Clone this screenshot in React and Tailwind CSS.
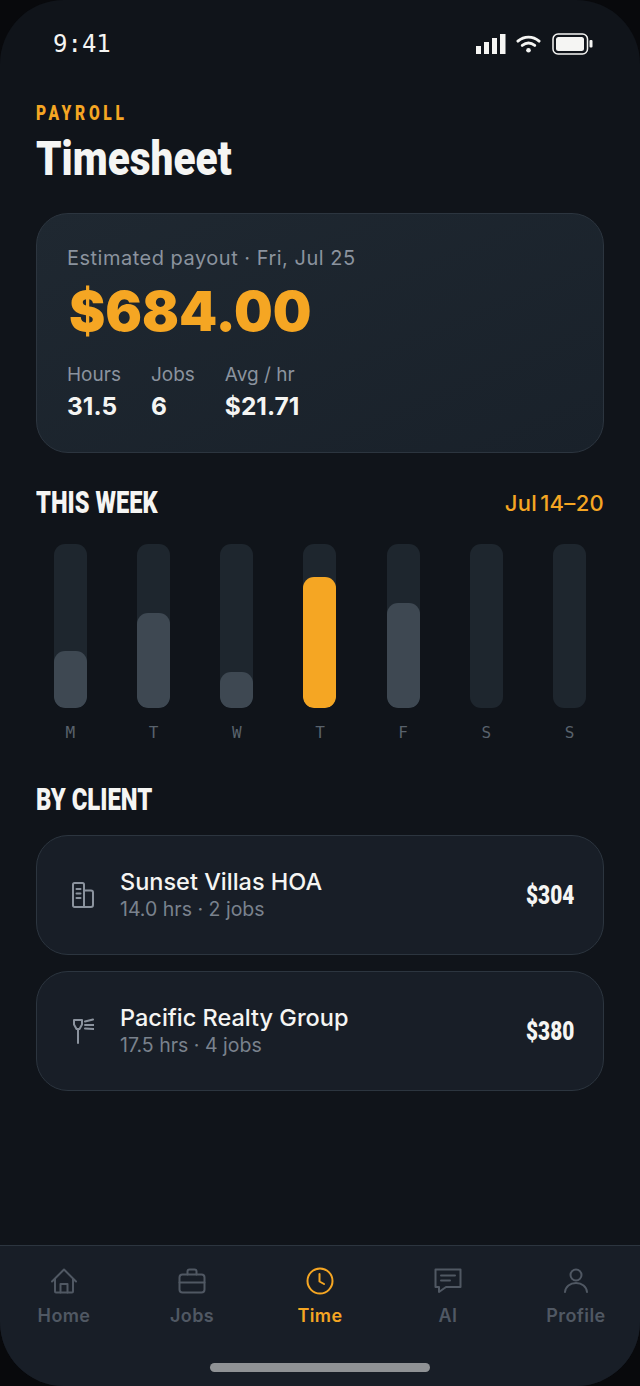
const days = [
  { label: "M", pct: 35 },
  { label: "T", pct: 58 },
  { label: "W", pct: 22 },
  { label: "T", pct: 80, active: true },
  { label: "F", pct: 64 },
  { label: "S", pct: 0 },
  { label: "S", pct: 0 },
];

const clients = [
  { name: "Sunset Villas HOA", meta: "14.0 hrs · 2 jobs", amount: "$304", icon: BuildingIcon },
  { name: "Pacific Realty Group", meta: "17.5 hrs · 4 jobs", amount: "$380", icon: SignIcon },
];

const tabs = [
  { label: "Home", icon: HomeIcon },
  { label: "Jobs", icon: BriefcaseIcon },
  { label: "Time", icon: ClockIcon, active: true },
  { label: "AI", icon: ChatIcon },
  { label: "Profile", icon: UserIcon },
];

const condensed = "font-['Roboto',sans-serif] font-black";

function BuildingIcon() {
  return (
    <svg width="22" height="26" viewBox="0 0 22 26" fill="none" stroke="currentColor" strokeWidth="2" strokeLinejoin="round" strokeLinecap="round">
      <path d="M1 2.500a1.500 1.500 0 0 1 1.500-1.500h8a1.500 1.500 0 0 1 1.500 1.500V25H2.500A1.500 1.500 0 0 1 1 23.500z" />
      <path d="M12 8.500h7a2 2 0 0 1 2 2V23a2 2 0 0 1-2 2h-7" />
      <path d="M4.500 7h4M4.500 11.500h4M4.500 16h4" />
    </svg>
  );
}

function SignIcon() {
  return (
    <svg width="22" height="26" viewBox="-1 0 22 26" fill="none" stroke="currentColor" strokeWidth="2" strokeLinejoin="round" strokeLinecap="round">
      <path d="M1 2h8v4.500L6.500 11h-3L1 6.500z" />
      <path d="M5 11v14" />
      <path d="M12 3.500L20 1.500M12 7h8.500M12 10.500l8.500.500" />
    </svg>
  );
}

function HomeIcon() {
  return (
    <svg width="28" height="28" viewBox="0 0 28 28" fill="none" stroke="currentColor" strokeWidth="2" strokeLinejoin="round" strokeLinecap="round">
      <path d="M2 14.500 14 2.500l12 12" />
      <path d="M5 12v12.500a1 1 0 0 0 1 1h16a1 1 0 0 0 1-1V12" />
      <path d="M10.500 25.500V17h7v8.500" />
    </svg>
  );
}

function BriefcaseIcon() {
  return (
    <svg width="28" height="28" viewBox="0 0 28 28" fill="none" stroke="currentColor" strokeWidth="2" strokeLinejoin="round" strokeLinecap="round">
      <rect x="1.500" y="7.500" width="25" height="18" rx="3" />
      <path d="M9.500 7.500V4.500a2 2 0 0 1 2-2h5a2 2 0 0 1 2 2v3" />
      <path d="M1.500 15.500h25" />
    </svg>
  );
}

function ClockIcon() {
  return (
    <svg width="28" height="28" viewBox="0 0 28 28" fill="none" stroke="currentColor" strokeWidth="2" strokeLinejoin="round" strokeLinecap="round">
      <circle cx="14" cy="14" r="12.500" />
      <path d="M13.500 7v7.500l4.500 2.500" />
    </svg>
  );
}

function ChatIcon() {
  return (
    <svg width="28" height="28" viewBox="0 0 28 28" fill="none" stroke="currentColor" strokeWidth="2" strokeLinejoin="round" strokeLinecap="round">
      <path d="M1.500 2.500h25v17.500H12l-7 5v-5H1.500z" />
      <path d="M7 8.500h14M7 13.500h9" />
    </svg>
  );
}

function UserIcon() {
  return (
    <svg width="28" height="28" viewBox="0 0 28 28" fill="none" stroke="currentColor" strokeWidth="2" strokeLinejoin="round" strokeLinecap="round">
      <circle cx="14" cy="8" r="5.500" />
      <path d="M3 25c.500-5.500 5-9 11-9s10.500 3.500 11 9" />
    </svg>
  );
}

function StatusIcons() {
  return (
    <div className="flex items-center gap-[10px]">
      <svg width="30" height="20" viewBox="0 0 30 20" fill="currentColor">
        <rect x="0" y="12" width="5" height="8" />
        <rect x="8" y="8" width="5" height="12" />
        <rect x="16" y="4" width="5" height="16" />
        <rect x="24" y="0" width="5.500" height="20" />
      </svg>
      <svg width="25" height="20" viewBox="0 0 26 20" fill="none" stroke="currentColor" strokeWidth="3" strokeLinecap="round">
        <path d="M2 7C8.500 1.500 17.500 1.500 24 7" />
        <path d="M6.500 11.500c4-3 9-3 13 0" />
        <circle cx="13" cy="16.500" r="2.400" fill="currentColor" stroke="none" />
      </svg>
      <svg width="41" height="22" viewBox="0 0 41 22" fill="none" className="ml-[1px]">
        <rect x="1" y="1" width="34.500" height="20" rx="5" stroke="currentColor" strokeWidth="1.500" />
        <rect x="4" y="4" width="28" height="14" rx="2.500" fill="currentColor" />
        <rect x="37.500" y="7" width="3" height="7.500" rx="1" fill="currentColor" />
      </svg>
    </div>
  );
}

function Stat({ label, value }) {
  return (
    <div>
      <div className="text-[19px] leading-[24px] text-[#8b939e]">{label}</div>
      <div className="mt-[4px] text-[24.500px] leading-[30px] font-bold text-[#f5f5f3]">{value}</div>
    </div>
  );
}

export default function App() {
  return (
    <div className="h-[1386px] w-[640px] overflow-hidden bg-[#08090c] font-['Inter',sans-serif]">
      <div className="flex h-full flex-col overflow-hidden rounded-[64px] bg-[#10141a]">
        <div className="flex h-[88px] shrink-0 items-center justify-between pr-[47px] pl-[53px] text-[#f5f5f3]">
          <span className="font-['DejaVu_Sans_Mono',monospace] text-[24px] leading-none">9:41</span>
          <StatusIcons />
        </div>

        <div className="flex-1 px-[36px]">
          <div className={`${condensed} mt-[11px] origin-left scale-x-[0.74] text-[21px] leading-[28px] tracking-[5px] text-[#f5a623]`}>PAYROLL</div>
          <h1 className={`${condensed} mt-[3px] origin-left scale-x-[0.845] text-[48px] leading-[57px] text-[#f5f5f3]`}>Timesheet</h1>

          <div className="mt-[26px] h-[240px] rounded-[32px] border-[1.5px] border-[#2c353f] bg-gradient-to-br from-[#1f2831] to-[#19212a] px-[30px] pt-[30px]">
            <div className="text-[20px] leading-[28px] tracking-[0.5px] text-[#8b939e]">Estimated payout · Fri, Jul 25</div>
            <div className="mt-[9px] ml-[2px] text-[54.500px] leading-[60px] font-black text-[#f5a623]">$684.00</div>
            <div className="mt-[22px] flex gap-[30px]">
              <Stat label="Hours" value="31.5" />
              <Stat label="Jobs" value="6" />
              <Stat label="Avg / hr" value="$21.71" />
            </div>
          </div>

          <div className="mt-[31px] flex items-center justify-between">
            <h2 className={`${condensed} origin-left scale-x-[0.763] text-[31px] leading-[38px] text-[#f5f5f3]`}>THIS WEEK</h2>
            <span className="text-[22px] leading-[28px] font-medium tracking-[0.3px] [word-spacing:-3px] text-[#f5a623]">Jul 14–20</span>
          </div>

          <div className="mt-[22px] grid grid-cols-7 gap-[14.400px]">
            {days.map((day, i) => (
              <div key={i} className="flex flex-col items-center">
                <div className="flex h-[164px] w-[33px] flex-col justify-end overflow-hidden rounded-[11px] bg-[#1e262e]">
                  <div
                    className={`rounded-[11px] ${day.active ? "bg-[#f5a623]" : "bg-[#3e4852]"}`}
                    style={{ height: `${day.pct}%` }}
                  />
                </div>
                <div className="mt-[15px] font-['DejaVu_Sans_Mono',monospace] text-[16px] leading-[20px] text-[#59626c]">{day.label}</div>
              </div>
            ))}
          </div>

          <h2 className={`${condensed} mt-[38px] origin-left scale-x-[0.77] text-[31px] leading-[38px] text-[#f5f5f3]`}>BY CLIENT</h2>

          <div className="mt-[16px] flex flex-col gap-[16px]">
            {clients.map((client) => {
              const Icon = client.icon;
              return (
                <div key={client.name} className="flex h-[120px] items-center rounded-[32px] border-[1.5px] border-[#2c353f] bg-[#181e27] pr-[29px] pl-[35px]">
                  <span className="text-[#8b939e]"><Icon /></span>
                  <div className="ml-[26px] flex-1">
                    <div className="text-[23.500px] leading-[28px] font-medium text-[#f5f5f3]">{client.name}</div>
                    <div className="text-[19.500px] leading-[26px] text-[#7a828d]">{client.meta}</div>
                  </div>
                  <span className={`${condensed} inline-block origin-right scale-x-[0.8] text-[26px] text-[#f5f5f3]`}>{client.amount}</span>
                </div>
              );
            })}
          </div>
        </div>

        <div className="relative h-[141px] shrink-0 border-t-[1.5px] border-[#2c353f] bg-[#181e27] pt-[21px]">
          <div className="grid grid-cols-5">
            {tabs.map((tab) => {
              const Icon = tab.icon;
              return (
                <div key={tab.label} className={`flex flex-col items-center ${tab.active ? "text-[#f5a623]" : "text-[#505863]"}`}>
                  <Icon />
                  <span className="mt-[9px] text-[18px] leading-[24px] font-semibold tracking-[0.4px]">{tab.label}</span>
                </div>
              );
            })}
          </div>
          <div className="absolute bottom-[14px] left-[210px] h-[9px] w-[220px] rounded-full bg-[#8f9295]" />
        </div>
      </div>
    </div>
  );
}
